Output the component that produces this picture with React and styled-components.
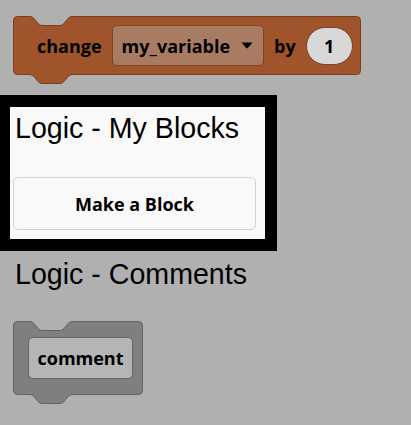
import React from 'react';
import styled, { createGlobalStyle } from 'styled-components';

const GlobalStyle = createGlobalStyle`
  html, body {
    margin: 0;
    padding: 0;
    background: #b0b0b0;
  }
  body {
    font-family: 'Liberation Sans', Arial, sans-serif;
  }
`;

const Flyout = styled.div`
  display: flex;
  flex-direction: column;
  align-items: flex-start;
  padding: 16px 0 0 10px;
  width: 411px;
  height: 425px;
  box-sizing: border-box;
  overflow: hidden;
`;

const BlockWrap = styled.div`
  position: relative;
  margin-left: 3px;
  width: ${(p) => p.$w}px;
  height: ${(p) => p.$h + 10}px;
  margin-top: ${(p) => p.$top || 0}px;
`;

const BlockShape = styled.svg`
  position: absolute;
  left: 0;
  top: 0;
`;

const BlockRow = styled.div`
  position: relative;
  display: flex;
  align-items: center;
  gap: ${(p) => p.$gap || 0}px;
  height: ${(p) => p.$h}px;
  padding: ${(p) => p.$pad};
  box-sizing: border-box;
`;

const BlockText = styled.span`
  font-family: 'Open Sans', 'Noto Sans', sans-serif;
  font-weight: 700;
  font-size: 18px;
  color: #000;
  white-space: nowrap;
`;

const Dropdown = styled.div`
  display: flex;
  flex-shrink: 0;
  align-items: center;
  gap: 11px;
  height: 41px;
  padding: 0 10px 0 9px;
  box-sizing: border-box;
  background: #a97b63;
  border: 1px solid #7b4326;
  border-radius: 5px;
`;

const Caret = styled.svg`
  display: block;
`;

const Oval = styled.div`
  display: flex;
  flex-shrink: 0;
  align-items: center;
  justify-content: center;
  width: 47px;
  height: 38px;
  box-sizing: border-box;
  background: #d8d8d8;
  border: 1px solid #7b4326;
  border-radius: 19px;
`;

const CommentField = styled.div`
  display: flex;
  align-items: center;
  justify-content: center;
  width: 105px;
  height: 42px;
  box-sizing: border-box;
  background: #b5b5b5;
  border: 1px solid #666;
  border-radius: 5px;
`;

const Section = styled.div`
  margin-top: ${(p) => p.$top}px;
  padding: ${(p) => p.$pad};
  width: ${(p) => (p.$w ? `${p.$w}px` : 'auto')};
  box-sizing: border-box;
  background: ${(p) => (p.$boxed ? '#f9f9f9' : 'transparent')};
  outline: ${(p) => (p.$boxed ? '12px solid #000' : 'none')};
`;

const Label = styled.div`
  font-family: 'Liberation Sans', Arial, sans-serif;
  font-size: 28.6px;
  line-height: 32px;
  color: #000;
  white-space: nowrap;
`;

const MakeButton = styled.button`
  display: block;
  margin: 33px 0 0 -2px;
  width: 243px;
  height: 53px;
  background: #f9f9f9;
  border: 1px solid #d2d2d2;
  border-radius: 5px;
  font-family: 'Open Sans', 'Noto Sans', sans-serif;
  font-weight: 700;
  font-size: 18px;
  color: #000;
  cursor: pointer;
`;

const notchPath = (w, h) => {
  const r = 4;
  const x = w - 0.5;
  const y = h - 0.5;
  return [
    `M0.5 ${r + 0.5}`,
    `Q0.5 0.5 ${r + 0.5} 0.5`,
    'H17 Q19 0.5 21 2.5 L25 7.5 Q27 9.5 29 9.5 H47 Q49 9.5 51 7.5 L55 2.5 Q57 0.5 59 0.5',
    `H${x - r} Q${x} 0.5 ${x} ${r + 0.5}`,
    `V${y - r} Q${x} ${y} ${x - r} ${y}`,
    `H59 Q57 ${y} 55 ${y + 2} L51 ${y + 7} Q49 ${y + 9} 47 ${y + 9} H29 Q27 ${y + 9} 25 ${y + 7} L21 ${y + 2} Q19 ${y} 17 ${y}`,
    `H${r + 0.5} Q0.5 ${y} 0.5 ${y - r} Z`,
  ].join(' ');
};

const Block = ({ w, h, fill, stroke, top, pad, gap, children }) => (
  <BlockWrap $w={w} $h={h} $top={top}>
    <BlockShape width={w} height={h + 10}>
      <path d={notchPath(w, h)} fill={fill} stroke={stroke} strokeWidth="1" />
    </BlockShape>
    <BlockRow $h={h} $pad={pad} $gap={gap}>
      {children}
    </BlockRow>
  </BlockWrap>
);

export default function App() {
  return (
    <>
      <GlobalStyle />
      <Flyout>
        <Block w={348} h={59} fill="#a0542c" stroke="#7b3d1c" pad="0 10px 0 24px" gap={10}>
          <BlockText>change</BlockText>
          <Dropdown>
            <BlockText>my_variable</BlockText>
            <Caret width="12" height="7" viewBox="0 0 12 7">
              <path d="M0.5 0.5 H11.5 L7 5.8 Q6 6.8 5 5.8 Z" fill="#000" />
            </Caret>
          </Dropdown>
          <BlockText>by</BlockText>
          <Oval>
            <BlockText>1</BlockText>
          </Oval>
        </Block>

        <Section $boxed $top={22} $w={255} $pad="5px 5px 9px 5px">
          <Label>Logic - My Blocks</Label>
          <MakeButton>Make a Block</MakeButton>
        </Section>

        <Section $top={19} $pad="0 5px">
          <Label>Logic - Comments</Label>
        </Section>

        <Block w={130} h={74} fill="#7f7f7f" stroke="#636363" top={31} pad="0 10px 0 15px">
          <CommentField>
            <BlockText>comment</BlockText>
          </CommentField>
        </Block>
      </Flyout>
    </>
  );
}
